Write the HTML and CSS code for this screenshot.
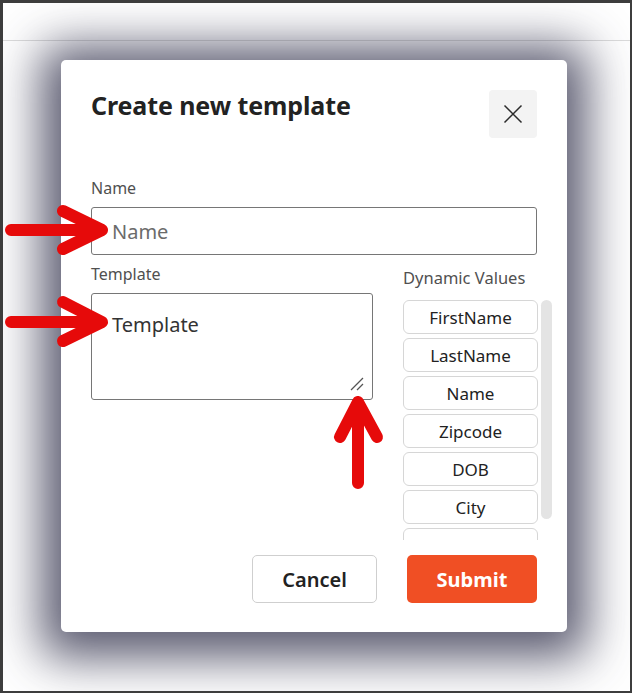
FILE: index.html
```html
<!DOCTYPE html>
<html lang="en">
<head>
    <meta charset="UTF-8">
    <meta name="viewport" content="width=device-width, initial-scale=1.0">
    <title>Create new template</title>
<link rel="stylesheet" href="styles.css">
</head>
<body>
    <div class="frame">
        <div class="topbar"></div>

        <div class="overlay">
            <form class="modal" name="template">
                <div class="modal-head">
                    <h1 class="modal-title">Create new template</h1>
                    <button type="button" class="close" aria-label="Close">
                        <svg width="20" height="20" viewBox="0 0 20 20">
                            <path d="M1.5 1.5 L18.5 18.5 M18.5 1.5 L1.5 18.5" stroke="#2b2b2b" stroke-width="1.5" fill="none" />
                        </svg>
                    </button>
                </div>

                <label class="field-label" for="name">Name</label>
                <input type="text" id="name" class="text-input" placeholder="Name" />

                <div class="template-row">
                    <div class="template-col">
                        <label class="field-label" for="body">Template</label>
                        <div class="area-wrap">
                            <textarea id="body" class="text-area">Template</textarea>
                            <svg class="grip" width="14" height="14" viewBox="0 0 14 14">
                                <path d="M1 13 L13 1 M7 13 L13 7" stroke="#555" stroke-width="1.3" fill="none" />
                            </svg>
                        </div>
                    </div>
                    <div class="values-col">
                        <div class="field-label values-label">Dynamic Values</div>
                        <div class="values-box">
                            <div class="values">
                                <span class="chip">FirstName</span>
                                <span class="chip">LastName</span>
                                <span class="chip">Name</span>
                                <span class="chip">Zipcode</span>
                                <span class="chip">DOB</span>
                                <span class="chip">City</span>
                                <span class="chip">Email</span>
                            </div>
                            <div class="thumb"></div>
                        </div>
                    </div>
                </div>

                <div class="actions">
                    <button type="button" class="btn btn-cancel">Cancel</button>
                    <button type="button" class="btn btn-submit">Submit</button>
                </div>
            </form>
        </div>

        <!-- annotation arrows -->
        <svg class="marks" width="632" height="693" viewBox="0 0 632 693">
            <g stroke="#e60a0a" stroke-width="12" stroke-linecap="round" stroke-linejoin="round" fill="none">
                <path d="M11 230 H102 M63 211 L102 230 L63 249" />
                <path d="M11 322 H102 M63 302 L102 322 L63 341" />
                <path d="M358 483 V402 M340 437 L358 402 L377 437" />
            </g>
        </svg>
    </div>
</body>
</html>
```

FILE: styles.css
```css
* {
    margin: 0;
    padding: 0;
    box-sizing: border-box;
    font-family: "Noto Sans", "Open Sans", sans-serif;
}
body {
    background: #3d3d3d;
}
.frame {
    position: relative;
    width: 632px;
    height: 693px;
    border-style: solid;
    border-color: #3d3d3d;
    border-width: 3px 2px 2px 3px;
    background: #fff;
    overflow: hidden;
}
.topbar {
    height: 38px;
    border-bottom: 1px solid #dcdcdc;
    background: #fff;
}
.overlay {
    position: absolute;
    top: 0;
    left: 0;
    right: 0;
    bottom: 0;
}
.modal {
    display: flex;
    flex-direction: column;
    width: 506px;
    margin: 57px 0 0 58px;
    padding: 30px 30px 29px;
    background: #fff;
    border-radius: 5px;
    box-shadow: 0 6px 48px 20px rgba(45, 45, 72, 0.78);
}
.modal-head {
    display: flex;
    justify-content: space-between;
    align-items: flex-start;
    height: 48px;
    margin-bottom: 39px;
}
.modal-title {
    font-size: 25px;
    line-height: 30px;
    font-weight: 700;
    color: #222;
    letter-spacing: -0.1px;
}
.close {
    display: grid;
    place-items: center;
    width: 48px;
    height: 48px;
    border: none;
    border-radius: 4px;
    background: #f3f3f3;
}
.field-label {
    display: block;
    font-size: 16px;
    line-height: 22px;
    color: #505050;
    margin-bottom: 8px;
}
.text-input {
    width: 100%;
    height: 48px;
    padding: 0 20px;
    border: 1px solid #767676;
    border-radius: 3px;
    font-size: 20px;
    color: #333;
    outline: none;
}
.text-input::placeholder {
    color: #6b6b6b;
}
.template-row {
    display: grid;
    grid-template-columns: 282px 150px;
    column-gap: 30px;
    margin-top: 8px;
}
.area-wrap {
    position: relative;
}
.text-area {
    display: block;
    width: 282px;
    height: 107px;
    padding: 16px 20px 14px;
    border: 1px solid #767676;
    border-radius: 3px;
    font-size: 20px;
    line-height: 30px;
    color: #333;
    outline: none;
    resize: none;
}
.grip {
    position: absolute;
    right: 9px;
    bottom: 9px;
}
.values-col {
    padding-top: 4px;
}
.values-label {
    font-size: 16.5px;
    margin-bottom: 11px;
    white-space: nowrap;
}
.values-box {
    display: flex;
    gap: 3px;
}
.values {
    display: flex;
    flex-direction: column;
    gap: 4px;
    width: 135px;
    height: 240px;
    overflow: hidden;
}
.thumb {
    width: 11px;
    height: 219px;
    border-radius: 6px;
    background: #e4e4e4;
}
.chip {
    flex: none;
    display: grid;
    place-items: center;
    height: 34px;
    border: 1px solid #d6d6d6;
    border-radius: 6px;
    font-size: 17px;
    color: #222;
}
.actions {
    display: flex;
    justify-content: flex-end;
    gap: 30px;
    margin-top: 15px;
}
.btn {
    height: 48px;
    border-radius: 5px;
    font-size: 20px;
    cursor: pointer;
}
.btn-cancel {
    width: 125px;
    border: 1px solid #cfcfcf;
    background: #fff;
    color: #222;
    font-weight: 600;
}
.btn-submit {
    width: 130px;
    border: none;
    background: #f04f24;
    color: #fff;
    font-weight: 700;
}
.marks {
    position: absolute;
    top: -3px;
    left: -3px;
    pointer-events: none;
}
```
